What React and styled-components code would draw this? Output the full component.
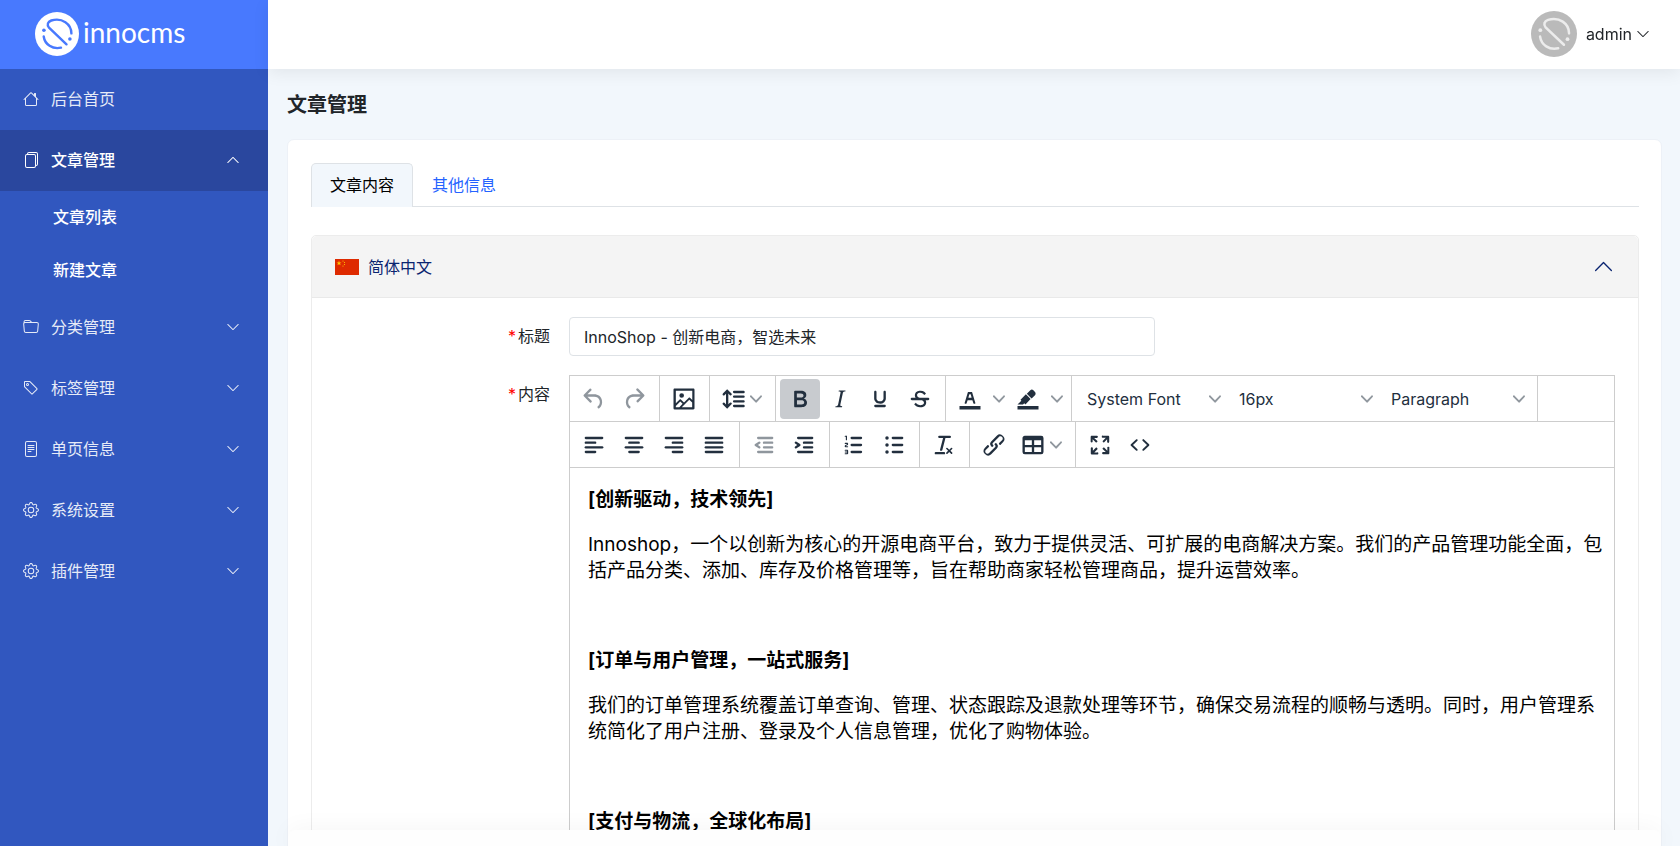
import React, { useState } from "react";
import styled, { createGlobalStyle, css } from "styled-components";
import {
  BsHouse,
  BsFiles,
  BsFolder,
  BsTag,
  BsFileText,
  BsGear,
  BsChevronDown,
  BsChevronUp,
} from "react-icons/bs";

const GlobalStyle = createGlobalStyle`
  *, *::before, *::after { box-sizing: border-box; }
  body {
    margin: 0;
    font-family: Inter, "Noto Sans CJK SC", sans-serif;
    font-size: 16px;
    line-height: 24px;
    color: #212529;
    background: #f2f7fc;
  }
  button, input, select { font: inherit; color: inherit; }
`;

/* ---------- page frame ---------- */

const Page = styled.div`
  display: flex;
  height: 100vh;
  overflow: hidden;
`;

const Sidebar = styled.aside`
  flex: 0 0 268px;
  background: #3157bf;
`;

const Brand = styled.a`
  display: flex;
  align-items: center;
  gap: 4px;
  height: 69px;
  padding: 0 0 2px 35px;
  background: #4879fe;
  color: #fff;
  font-family: Lato, sans-serif;
  font-size: 28px;
  line-height: 32px;
  text-decoration: none;

  span {
    padding-bottom: 4px;
  }
`;

const navRow = css`
  display: flex;
  align-items: center;
  width: 100%;
  border: 0;
  text-align: left;
  text-decoration: none;
  cursor: pointer;
`;

const NavItem = styled.button`
  ${navRow}
  gap: 12px;
  height: 61px;
  padding: 0 28px 2px 23px;
  background: ${(p) => (p.$active ? "#2a479e" : "transparent")};
  color: ${(p) => (p.$active ? "#fff" : "#e6ebf7")};
  font-weight: ${(p) => (p.$active ? 500 : 400)};

  svg {
    flex: none;
  }
`;

const NavLabel = styled.span`
  flex: 1;
`;

const SubItem = styled.a`
  ${navRow}
  height: 53px;
  padding: 0 0 2px 53px;
  color: #fff;
  font-weight: 500;
`;

const Main = styled.div`
  display: flex;
  flex: 1;
  flex-direction: column;
  min-width: 0;
`;

const TopBar = styled.header`
  z-index: 1;
  display: flex;
  flex: 0 0 69px;
  align-items: center;
  justify-content: flex-end;
  padding: 0 30px 2px;
  background: #fff;
  box-shadow: 0 4px 16px rgba(0, 0, 0, 0.07);
`;

const UserMenu = styled.button`
  display: flex;
  align-items: center;
  gap: 4px;
  padding: 0;
  border: 0;
  background: none;
  cursor: pointer;

  span {
    margin-left: 5px;
  }
`;

const Scroll = styled.main`
  flex: 1;
  min-height: 0;
  overflow-y: auto;
  padding: 0 18px 0 19px;
  scrollbar-width: none;
`;

const PageTitle = styled.h1`
  margin: 0;
  padding: 22px 0 20px;
  font-size: 20px;
  line-height: 28px;
  font-weight: 600;
`;

const Card = styled.section`
  border: 1px solid #edf1f7;
  border-radius: 7px;
  background: #fff;
`;

const CardBody = styled.div`
  padding: 23px 22px 40px 23px;
`;

const ActionBar = styled.footer`
  position: sticky;
  bottom: 0;
  height: 16px;
  border-radius: 8px 8px 0 0;
  background: #fefefe;
  box-shadow: 0 0 24px rgba(0, 0, 0, 0.05);
`;

/* ---------- tabs and language panel ---------- */

const Tabs = styled.div`
  display: flex;
  border-bottom: 1px solid #dee2e6;
`;

const Tab = styled.button`
  height: 44px;
  margin-bottom: -1px;
  padding: 0 18px 2px;
  border: 1px solid ${(p) => (p.$active ? "#dee2e6" : "transparent")};
  border-bottom: 0;
  border-radius: 5px 5px 0 0;
  background: ${(p) => (p.$active ? "#f2f7fc" : "transparent")};
  color: ${(p) => (p.$active ? "#000" : "#2563ff")};
  cursor: pointer;
`;

const Panel = styled.div`
  margin-top: 28px;
  border: 1px solid #ececec;
  border-radius: 5px;
`;

const PanelHeader = styled.button`
  display: flex;
  align-items: center;
  gap: 9px;
  width: 100%;
  height: 62px;
  padding: 0 24px 0 23px;
  border: 0;
  border-bottom: 1px solid #e9e9e9;
  border-radius: 5px 5px 0 0;
  background: #f4f4f4;
  color: #0a2470;
  text-align: left;
  cursor: pointer;

  span {
    flex: 1;
  }
`;

const FormGrid = styled.div`
  display: grid;
  grid-template-columns: 238px minmax(0, 1fr);
  column-gap: 19px;
  row-gap: 19px;
  padding: 19px 23px 24px 0;
`;

const Label = styled.label`
  justify-self: end;
  padding-top: 7px;

  &::before {
    content: "*";
    margin-right: 2px;
    color: #f00;
  }
`;

const TextInput = styled.input`
  width: 56%;
  height: 39px;
  padding: 0 14px 1px;
  border: 1px solid #dee2e6;
  border-radius: 4px;
  background: #fff;
  outline: none;
`;

/* ---------- rich text editor ---------- */

const Editor = styled.div`
  border: 1px solid #cdcdcd;
`;

const ToolRow = styled.div`
  display: flex;
  height: 46px;
  border-bottom: 1px solid #cdcdcd;
`;

const ToolGroup = styled.div`
  display: flex;
  align-items: center;
  padding: 0 5px 0 4px;
  border-right: ${(p) => (p.$last ? "0" : "1px solid #cdcdcd")};
`;

const ToolButton = styled.button`
  display: flex;
  flex: none;
  align-items: center;
  justify-content: center;
  gap: 3px;
  width: ${(p) => (p.$menu ? 56 : 40)}px;
  height: 40px;
  padding: ${(p) => (p.$menu ? "0 3px 0 0" : "0")};
  border: 0;
  border-radius: 4px;
  background: ${(p) => (p.$on ? "#c8cbcf" : "transparent")};
  color: #222f3e;
  opacity: ${(p) => (p.disabled ? 0.5 : 1)};
`;

const SplitArrow = styled(ToolButton)`
  width: 18px;
`;

const SelectBox = styled.label`
  display: grid;
  align-items: center;
  width: 152px;
  height: 40px;
  color: #222f3e;

  > * {
    grid-area: 1 / 1;
  }

  svg {
    justify-self: end;
    margin-right: 7px;
    pointer-events: none;
  }
`;

const ToolSelect = styled.select`
  width: 100%;
  height: 40px;
  padding: 0 24px 0 11px;
  border: 0;
  background: transparent;
  appearance: none;
`;

const Document = styled.div`
  min-height: 560px;
  padding: 19px 8px 19px 18px;
  color: #000;
  font-size: 19px;
  line-height: 26px;
  outline: none;

  p {
    margin: 0 0 19px;
    min-height: 26px;
  }
`;

/* ---------- drawings ---------- */

function InnoMark({ size, disc, ink }) {
  return (
    <svg width={size} height={size} viewBox="0 0 44 44" aria-hidden="true">
      <circle cx="22" cy="22" r="22" fill={disc} />
      <g fill="none" stroke={ink} strokeWidth="2.4" strokeLinecap="round">
        <path d="M31.5 32.3 14 15.6C11.6 13 12.800 9.600 16.300 8.500C27 5.200 36.400 12 36.400 21.400" />
        <path d="M8.700 24.500C9.800 32.500 17.500 37.600 26 35.700" />
      </g>
      <circle cx="8.900" cy="18.300" r="1.800" fill={ink} />
      <circle cx="34.900" cy="27" r="1.800" fill={ink} />
    </svg>
  );
}

function ChinaFlag() {
  const small = [
    [8, 2],
    [9.5, 3.5],
    [9.5, 5.5],
    [8, 7],
  ];
  return (
    <svg width="24" height="16" viewBox="0 0 24 16" aria-hidden="true">
      <rect width="24" height="16" fill="#de2a00" />
      <path
        fill="#ffc800"
        d="M4 1.600l.6 1.800h1.900L5 4.500l.6 1.800L4 5.200 2.400 6.300 3 4.500 1.500 3.400h1.900z"
      />
      {small.map(([x, y]) => (
        <circle key={`${x}-${y}`} cx={x} cy={y} r="0.6" fill="#ffc800" />
      ))}
    </svg>
  );
}

const ICONS = {
  undo: "M6.4 8H12c3.7 0 6.200 2 6.800 5.100.6 2.700-.4 5.600-2.300 6.800a1 1 0 0 1-1-1.800c1.100-.6 1.800-2.700 1.400-4.600-.5-2.100-2.100-3.500-4.900-3.500H6.400l3.300 3.300a1 1 0 1 1-1.400 1.400l-5-5a1 1 0 0 1 0-1.400l5-5a1 1 0 0 1 1.400 1.400L6.400 8Z",
  redo: "M17.600 10H12c-2.800 0-4.400 1.400-4.900 3.500-.4 2 .3 4 1.400 4.600a1 1 0 1 1-1 1.800c-2-1.200-2.900-4.100-2.300-6.800.6-3 3-5.100 6.800-5.100h5.600l-3.300-3.300a1 1 0 1 1 1.400-1.400l5 5a1 1 0 0 1 0 1.400l-5 5a1 1 0 0 1-1.400-1.400l3.300-3.300Z",
  image:
    "m5 15.700 3.300-3.200c.3-.3.7-.3 1 0L12 15l4.100-4c.3-.4.8-.4 1 0l2 1.900V5H5v10.700ZM5 18V19h3l2.800-2.900-2-2L5 17.900Zm14-3-2.500-2.400-6.400 6.500H19v-4ZM4 3h16c.6 0 1 .4 1 1v16c0 .6-.4 1-1 1H4a1 1 0 0 1-1-1V4c0-.6.4-1 1-1Zm6 8a2 2 0 1 0 0-4 2 2 0 0 0 0 4Z",
  lineHeight:
    "M21 5a1 1 0 0 1 .1 2H13a1 1 0 0 1-.1-2H21Zm0 4a1 1 0 0 1 .1 2H13a1 1 0 0 1-.1-2H21Zm0 4a1 1 0 0 1 .1 2H13a1 1 0 0 1-.1-2H21Zm0 4a1 1 0 0 1 .1 2H13a1 1 0 0 1-.1-2H21ZM7 3.600l3.700 3.700a1 1 0 0 1-1.300 1.500h-.1L8 7.300v9.200l1.300-1.300a1 1 0 0 1 1.300 0h.1c.4.4.4 1 0 1.300v.1L7 20.400l-3.700-3.700a1 1 0 0 1 1.300-1.500h.1L6 16.700V7.400L4.700 8.700a1 1 0 0 1-1.300 0h-.1a1 1 0 0 1 0-1.300v-.1L7 3.600Z",
  bold: "M7.800 19c-.3 0-.5 0-.6-.2l-.2-.5V5.700c0-.2 0-.4.2-.5l.6-.2h5c1.500 0 2.700.3 3.500 1 .7.6 1.100 1.400 1.100 2.500a3 3 0 0 1-.6 1.900c-.4.6-1 1-1.600 1.200.4.1.9.3 1.300.6s.8.7 1 1.200c.4.4.5 1 .5 1.600 0 1.300-.4 2.300-1.300 3-.8.7-2.100 1-3.800 1H7.800Zm5-8.300c.6 0 1.200-.1 1.600-.5.4-.3.6-.7.6-1.300 0-1.100-.8-1.700-2.300-1.700H9.300v3.500h3.400Zm.5 6c.7 0 1.300-.1 1.700-.4.4-.4.6-.9.6-1.500s-.2-1-.7-1.400c-.4-.3-1-.4-2-.4H9.400v3.800h4Z",
  italic:
    "m16.700 4.700-.1.9h-.3c-.6 0-1 0-1.400.3-.3.3-.4.6-.5 1.100l-2.100 9.800v.6c0 .5.4.8 1.400.8h.2l-.2.8H8l.2-.8h.2c1.100 0 1.800-.5 2-1.500l2-9.800.1-.5c0-.6-.4-.8-1.400-.8h-.3l.2-.9h5.800Z",
  underline:
    "M16 5c.6 0 1 .4 1 1v5.500a4 4 0 0 1-.4 1.800l-1 1.400a5.300 5.300 0 0 1-5.500 1 5 5 0 0 1-1.600-1c-.5-.4-.8-.9-1.100-1.400a4 4 0 0 1-.4-1.800V6c0-.6.4-1 1-1s1 .4 1 1v5.500c0 .3 0 .6.2 1l.6.7a3.300 3.300 0 0 0 2.200.8 3.400 3.400 0 0 0 2.200-.8c.3-.2.4-.5.6-.8l.2-.9V6c0-.6.4-1 1-1ZM8 17h8c.6 0 1 .4 1 1s-.4 1-1 1H8a1 1 0 0 1 0-2Z",
  strike:
    "M15.600 8.500c-.5-.7-1-1.100-1.300-1.300-.6-.4-1.300-.6-2-.6-2.700 0-2.800 1.700-2.800 2.100 0 1.600 1.800 2 3.200 2.300 4.400.9 4.600 2.800 4.600 3.900 0 1.400-.7 4.100-5 4.100A6.200 6.200 0 0 1 7 16.400l1.500-1.100c.4.6 1.600 2 3.700 2 1.600 0 2.500-.4 3-1.200.4-.8.3-2-.8-2.600-.7-.4-1.600-.7-2.900-1-1-.2-3.900-.8-3.900-3.600C7.600 6 10.300 5 12.400 5c2.900 0 4.200 1.600 4.700 2.400l-1.500 1.100ZM5 11h14a1 1 0 0 1 0 2H5a1 1 0 0 1 0-2Z",
  textColor:
    "M3 18h18v3H3zM8.700 16h-.8a.5.5 0 0 1-.5-.6l2.700-9c.1-.3.3-.4.5-.4h2.800c.2 0 .4.1.5.4l2.700 9a.5.5 0 0 1-.5.6h-.8a.5.5 0 0 1-.4-.4l-.7-2.200c0-.3-.3-.4-.5-.4h-3.400c-.2 0-.4.1-.5.4l-.7 2.200c0 .3-.2.4-.4.4Zm2.600-7.600-.6 2a.5.5 0 0 0 .5.6h1.600a.5.5 0 0 0 .5-.6l-.6-2c0-.3-.3-.4-.5-.4h-.4c-.2 0-.4.1-.5.4Z",
  highlight:
    "M3 18h18v3H3zM7.700 16.700H3l3.300-3.300-.7-.8L10.200 8l4 4.100-4 4.200c-.2.2-.6.2-.8 0l-.6-.7-1.100 1.100zm5-7.500L11 7.400l3-2.900a2 2 0 0 1 2.600 0L18 6c.7.7.7 2 0 2.700l-2.900 2.900-1.800-1.800-.5-.6",
  outdent:
    "M7 5h12a1 1 0 0 1 0 2H7a1 1 0 1 1 0-2Zm5 4h7a1 1 0 0 1 0 2h-7a1 1 0 0 1 0-2Zm0 4h7a1 1 0 0 1 0 2h-7a1 1 0 0 1 0-2Zm-5 4h12a1 1 0 0 1 0 2H7a1 1 0 0 1 0-2Zm1.600-3.800a1 1 0 0 1-1.200 1.600l-3-2a1 1 0 0 1 0-1.600l3-2a1 1 0 0 1 1.200 1.600L6.800 12l1.800 1.200Z",
  indent:
    "M7 5h12a1 1 0 0 1 0 2H7a1 1 0 1 1 0-2Zm5 4h7a1 1 0 0 1 0 2h-7a1 1 0 0 1 0-2Zm0 4h7a1 1 0 0 1 0 2h-7a1 1 0 0 1 0-2Zm-5 4h12a1 1 0 0 1 0 2H7a1 1 0 0 1 0-2Zm-2.600-3.800L6.200 12l-1.800-1.200a1 1 0 0 1 1.200-1.600l3 2a1 1 0 0 1 0 1.600l-3 2a1 1 0 1 1-1.200-1.600Z",
  ordered:
    "M10 17h8a1 1 0 0 1 0 2h-8a1 1 0 0 1 0-2Zm0-6h8a1 1 0 0 1 0 2h-8a1 1 0 0 1 0-2Zm0-6h8a1 1 0 0 1 0 2h-8a1 1 0 1 1 0-2ZM6 4v3.500c0 .3-.2.5-.5.5a.5.5 0 0 1-.5-.5V5h-.5a.5.5 0 0 1 0-1H6Zm-1 8.800.2.2h1.300c.3 0 .5.2.5.5s-.2.5-.5.5H4.900a1 1 0 0 1-.9-1V13c0-.4.3-.8.6-1l1.200-.4.2-.3a.2.2 0 0 0-.2-.2H4.500a.5.5 0 0 1-.5-.5c0-.3.2-.5.5-.5h1.600c.5 0 .9.4.9 1v.1c0 .4-.3.8-.6 1l-1.200.4-.2.3ZM7 17v2c0 .6-.4 1-1 1H4.500a.5.5 0 0 1 0-1h1.200c.2 0 .3-.1.3-.3 0-.2-.1-.3-.3-.3H4.400a.4.4 0 1 1 0-.8h1.300c.2 0 .3-.1.3-.3 0-.2-.1-.3-.3-.3H4.500a.5.5 0 1 1 0-1H6c.6 0 1 .4 1 1Z",
  unordered:
    "M11 5h8a1 1 0 0 1 0 2h-8a1 1 0 0 1 0-2Zm0 6h8a1 1 0 0 1 0 2h-8a1 1 0 0 1 0-2Zm0 6h8a1 1 0 0 1 0 2h-8a1 1 0 0 1 0-2ZM4.500 6a1.500 1.500 0 1 1 3 0 1.500 1.500 0 0 1-3 0Zm0 6a1.500 1.500 0 1 1 3 0 1.500 1.500 0 0 1-3 0Zm0 6a1.500 1.500 0 1 1 3 0 1.500 1.500 0 0 1-3 0Z",
  clear:
    "M13.200 6a1 1 0 0 1 0 .2l-2.600 10a1 1 0 0 1-1 .8h-.2a.8.8 0 0 1-.8-1l2.600-10H8a1 1 0 1 1 0-2h9a1 1 0 0 1 0 2h-3.800ZM5 18h7a1 1 0 0 1 0 2H5a1 1 0 0 1 0-2Zm13 1.500L16.500 18 15 19.500a.7.7 0 0 1-1-1l1.500-1.500-1.500-1.500a.7.7 0 0 1 1-1l1.500 1.500 1.500-1.500a.7.7 0 0 1 1 1L17.500 17l1.500 1.500a.7.7 0 0 1-1 1Z",
  link: "M6.200 12.300a1 1 0 0 1 1.400 1.400l-2 2a2 2 0 1 0 2.600 2.800l4.800-4.800a1 1 0 0 0 0-1.400 1 1 0 1 1 1.400-1.300 2.900 2.900 0 0 1 0 4L9.600 20a3.900 3.900 0 0 1-5.500-5.500l2-2Zm11.600-.6a1 1 0 0 1-1.400-1.400l2-2a2 2 0 1 0-2.600-2.800L11 10.300a1 1 0 0 0 0 1.400A1 1 0 1 1 9.600 13a2.900 2.900 0 0 1 0-4L14.400 4a3.900 3.900 0 0 1 5.500 5.500l-2 2Z",
  table:
    "M19 4a2 2 0 0 1 2 2v12a2 2 0 0 1-2 2H5a2 2 0 0 1-2-2V6c0-1.100.9-2 2-2h14ZM5 14v4h6v-4H5Zm14 0h-6v4h6v-4Zm0-6h-6v4h6V8ZM5 12h6V8H5v4Z",
  fullscreen:
    "m15.300 10-1.200-1.300 2.900-3h-2.300a.9.9 0 1 1 0-1.700H19c.5 0 .9.4.9.9v4.400a.9.9 0 1 1-1.800 0V7l-2.900 3Zm0 4 3 3v-2.300a.9.9 0 1 1 1.700 0V19c0 .5-.4.9-.9.9h-4.400a.9.9 0 1 1 0-1.800H17l-3-2.900 1.300-1.200ZM10 15.400l-2.900 3h2.300a.9.9 0 1 1 0 1.700H5a.9.9 0 0 1-.9-.9v-4.400a.9.9 0 1 1 1.800 0V17l2.900-3 1.200 1.300ZM8.700 10 5.700 7v2.300a.9.9 0 0 1-1.700 0V5c0-.5.4-.9.9-.9h4.400a.9.9 0 0 1 0 1.800H7l3 2.900-1.300 1.200Z",
  code: "M9.800 15.700c.3.3.3.8 0 1-.3.4-.9.4-1.200 0l-4.400-4.100a.8.8 0 0 1 0-1.200l4.400-4.200c.3-.3.9-.3 1.200 0 .3.3.3.8 0 1.100L6 12l3.800 3.700ZM14.200 15.700c-.3.3-.3.8 0 1 .4.4.9.4 1.200 0l4.400-4.100c.3-.3.3-.9 0-1.200l-4.400-4.200a.8.8 0 0 0-1.200 0c-.3.3-.3.8 0 1.100L18 12l-3.800 3.700Z",
};

/* Horizontal bars of the alignment icons: [x1, x2] for each of the four lines. */
const ALIGN = {
  left: [[5, 19], [5, 13], [5, 19], [5, 13]],
  center: [[5, 19], [8, 16], [5, 19], [8, 16]],
  right: [[5, 19], [11, 19], [5, 19], [11, 19]],
  justify: [[5, 19], [5, 19], [5, 19], [5, 19]],
};

const ALIGN_LABELS = { left: "左对齐", center: "居中对齐", right: "右对齐", justify: "两端对齐" };

/* These shapes overlap themselves and need every part filled. */
const SOLID = ["highlight", "strike"];

function ToolIcon({ name }) {
  return (
    <svg
      width="28"
      height="28"
      viewBox="0 0 24 24"
      fill="currentColor"
      fillRule={SOLID.includes(name) ? "nonzero" : "evenodd"}
      aria-hidden="true"
    >
      <path d={ICONS[name]} />
    </svg>
  );
}

function AlignIcon({ kind }) {
  return (
    <svg
      width="28"
      height="28"
      viewBox="0 0 24 24"
      stroke="currentColor"
      strokeWidth="2"
      strokeLinecap="round"
      aria-hidden="true"
    >
      {ALIGN[kind].map(([a, b], i) => (
        <path key={i} d={`M${a} ${6 + i * 4}H${b}`} />
      ))}
    </svg>
  );
}

function Arrow() {
  return (
    <svg width="12" height="12" viewBox="0 0 10 10" fill="#222f3e" fillOpacity="0.5" aria-hidden="true">
      <path d="M8.700 2.200c.3-.3.8-.3 1 0 .4.4.4.9 0 1.200L5.700 7.800c-.3.3-.9.3-1.200 0L.2 3.400a.8.8 0 0 1 0-1.200c.3-.3.8-.3 1.100 0L5 6l3.700-3.800Z" />
    </svg>
  );
}

/* ---------- composed parts ---------- */

function Tool({ icon, label, menu, ...rest }) {
  return (
    <ToolButton type="button" aria-label={label} $menu={menu} {...rest}>
      <ToolIcon name={icon} />
      {menu && <Arrow />}
    </ToolButton>
  );
}

function SplitTool({ icon, label }) {
  return (
    <>
      <Tool icon={icon} label={label} />
      <SplitArrow type="button" aria-label={`${label}菜单`}>
        <Arrow />
      </SplitArrow>
    </>
  );
}

function Picker({ label, options }) {
  return (
    <SelectBox>
      <ToolSelect aria-label={label}>
        {options.map((o) => (
          <option key={o}>{o}</option>
        ))}
      </ToolSelect>
      <Arrow />
    </SelectBox>
  );
}

const NAV = [
  { label: "后台首页", Icon: BsHouse },
  { label: "文章管理", Icon: BsFiles, active: true, children: ["文章列表", "新建文章"] },
  { label: "分类管理", Icon: BsFolder, menu: true },
  { label: "标签管理", Icon: BsTag, menu: true },
  { label: "单页信息", Icon: BsFileText, menu: true },
  { label: "系统设置", Icon: BsGear, menu: true },
  { label: "插件管理", Icon: BsGear, menu: true },
];

function Navigation() {
  return (
    <nav>
      {NAV.map(({ label, Icon, active, menu, children }) => (
        <React.Fragment key={label}>
          <NavItem type="button" $active={active}>
            <Icon size={16} />
            <NavLabel>{label}</NavLabel>
            {children && <BsChevronUp size={14} />}
            {menu && <BsChevronDown size={14} />}
          </NavItem>
          {children?.map((c) => (
            <SubItem key={c} href="#">
              {c}
            </SubItem>
          ))}
        </React.Fragment>
      ))}
    </nav>
  );
}

function Toolbar() {
  return (
    <>
      <ToolRow>
        <ToolGroup>
          <Tool icon="undo" label="撤销" disabled />
          <Tool icon="redo" label="重做" disabled />
        </ToolGroup>
        <ToolGroup>
          <Tool icon="image" label="图片" />
        </ToolGroup>
        <ToolGroup>
          <Tool icon="lineHeight" label="行高" menu />
        </ToolGroup>
        <ToolGroup>
          <Tool icon="bold" label="粗体" $on />
          <Tool icon="italic" label="斜体" />
          <Tool icon="underline" label="下划线" />
          <Tool icon="strike" label="删除线" />
        </ToolGroup>
        <ToolGroup>
          <SplitTool icon="textColor" label="文字颜色" />
          <SplitTool icon="highlight" label="背景颜色" />
        </ToolGroup>
        <ToolGroup>
          <Picker label="字体" options={["System Font", "Arial", "Georgia"]} />
          <Picker label="字号" options={["16px", "18px", "24px"]} />
          <Picker label="段落" options={["Paragraph", "Heading 1", "Heading 2"]} />
        </ToolGroup>
      </ToolRow>
      <ToolRow>
        <ToolGroup>
          {Object.keys(ALIGN).map((kind) => (
            <ToolButton key={kind} type="button" aria-label={ALIGN_LABELS[kind]}>
              <AlignIcon kind={kind} />
            </ToolButton>
          ))}
        </ToolGroup>
        <ToolGroup>
          <Tool icon="outdent" label="减少缩进" disabled />
          <Tool icon="indent" label="增加缩进" />
        </ToolGroup>
        <ToolGroup>
          <Tool icon="ordered" label="编号列表" />
          <Tool icon="unordered" label="项目列表" />
        </ToolGroup>
        <ToolGroup>
          <Tool icon="clear" label="清除格式" />
        </ToolGroup>
        <ToolGroup>
          <Tool icon="link" label="链接" />
          <Tool icon="table" label="表格" menu />
        </ToolGroup>
        <ToolGroup $last>
          <Tool icon="fullscreen" label="全屏" />
          <Tool icon="code" label="源代码" />
        </ToolGroup>
      </ToolRow>
    </>
  );
}

export default function App() {
  const [title, setTitle] = useState("InnoShop - 创新电商，智选未来");

  return (
    <>
      <GlobalStyle />
      <Page>
        <Sidebar>
          <Brand href="#">
            <InnoMark size={44} disc="#fff" ink="#4879fe" />
            <span>innocms</span>
          </Brand>
          <Navigation />
        </Sidebar>
        <Main>
          <TopBar>
            <UserMenu type="button">
              <InnoMark size={46} disc="#bababa" ink="#ececec" />
              <span>admin</span>
              <BsChevronDown size={14} />
            </UserMenu>
          </TopBar>
          <Scroll>
            <PageTitle>文章管理</PageTitle>
            <Card>
              <CardBody>
                <Tabs role="tablist">
                  <Tab type="button" role="tab" aria-selected="true" $active>
                    文章内容
                  </Tab>
                  <Tab type="button" role="tab" aria-selected="false">
                    其他信息
                  </Tab>
                </Tabs>
                <Panel>
                  <PanelHeader type="button" aria-expanded="true">
                    <ChinaFlag />
                    <span>简体中文</span>
                    <BsChevronUp size={21} />
                  </PanelHeader>
                  <FormGrid>
                    <Label htmlFor="title">标题</Label>
                    <TextInput id="title" value={title} onChange={(e) => setTitle(e.target.value)} />
                    <Label id="content-label">内容</Label>
                    <Editor>
                      <Toolbar />
                      <Document
                        role="textbox"
                        aria-multiline="true"
                        aria-labelledby="content-label"
                        contentEditable
                        suppressContentEditableWarning
                      >
                        <p>
                          <strong>[创新驱动，技术领先]</strong>
                        </p>
                        <p>
                          Innoshop，一个以创新为核心的开源电商平台，致力于提供灵活、可扩展的电商解决方案。我们的产品管理功能全面，包括产品分类、添加、库存及价格管理等，旨在帮助商家轻松管理商品，提升运营效率。
                        </p>
                        <p />
                        <p>
                          <strong>[订单与用户管理，一站式服务]</strong>
                        </p>
                        <p>
                          我们的订单管理系统覆盖订单查询、管理、状态跟踪及退款处理等环节，确保交易流程的顺畅与透明。同时，用户管理系统简化了用户注册、登录及个人信息管理，优化了购物体验。
                        </p>
                        <p />
                        <p>
                          <strong>[支付与物流，全球化布局]</strong>
                        </p>
                      </Document>
                    </Editor>
                  </FormGrid>
                </Panel>
              </CardBody>
              <ActionBar />
            </Card>
          </Scroll>
        </Main>
      </Page>
    </>
  );
}
